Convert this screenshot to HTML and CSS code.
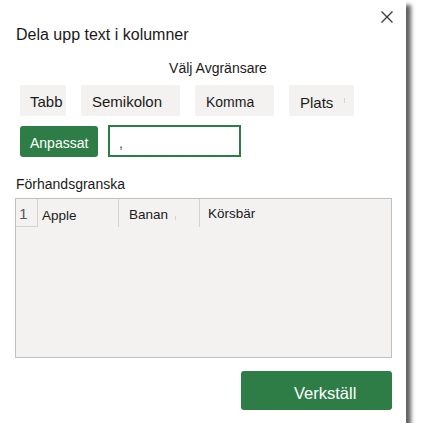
FILE: index.html
```html
<!DOCTYPE html>
<html lang="sv">
<head>
<meta charset="utf-8">
<title>Dela upp text i kolumner</title>
<link rel="stylesheet" href="styles.css">
</head>
<body>
<div class="dialog">
  <div class="topbar">
    <button class="close" aria-label="Stäng">
      <svg width="12" height="12" viewBox="0 0 12 12"><path d="M0.5 0.5 L11.5 11.5 M11.5 0.5 L0.5 11.5" stroke="#3b3a39" stroke-width="1.3" fill="none"/></svg>
    </button>
  </div>
  <h1 class="title">Dela upp text i kolumner</h1>
  <div class="delim-label">Välj Avgränsare</div>
  <div class="delims">
    <button class="delim w-tabb">Tabb</button>
    <button class="delim w-semi">Semikolon</button>
    <button class="delim w-komma">Komma</button>
    <button class="delim w-plats">Plats<span class="tick tick-plats"></span></button>
  </div>
  <div class="custom-row">
    <button class="custom">Anpassat</button>
    <div class="custom-input">,</div>
  </div>
  <div class="preview-label">Förhandsgranska</div>
  <div class="preview">
    <div class="prow">
      <div class="pcell pnum">1</div>
      <div class="pcell papple">Apple</div>
      <div class="pcell pbanan">Banan<span class="tick tick-banan"></span></div>
      <div class="pcell pkors">Körsbär</div>
    </div>
  </div>
  <div class="footer">
    <button class="apply">Verkställ</button>
  </div>
</div>
</body>
</html>
```
FILE: styles.css
```css
html, body {
  margin: 0;
  padding: 0;
  background: #ffffff;
}
body {
  font-family: "Liberation Sans", Arial, sans-serif;
  color: #1f1e1d;
}
button {
  font-family: inherit;
  border: none;
  margin: 0;
  cursor: pointer;
  display: flex;
  align-items: flex-start;
  text-align: left;
}
.dialog {
  width: 406px;
  height: 423px;
  box-sizing: border-box;
  background: #ffffff;
  padding: 11px 14px 0 15px;
  box-shadow: 5px 5px 4px rgba(0, 0, 0, 0.62);
}
.topbar {
  display: flex;
  justify-content: flex-end;
  height: 12px;
  margin-right: -1px;
}
.close {
  width: 12px;
  height: 12px;
  padding: 0;
  background: transparent;
}
.close svg {
  display: block;
}
.title {
  margin: 2px 0 0 1px;
  font-size: 16px;
  font-weight: normal;
  line-height: 20px;
  color: #1b1a19;
}
.delim-label {
  margin-top: 15px;
  padding-left: 29px;
  text-align: center;
  font-size: 14px;
  line-height: 16px;
  color: #1b1a19;
}
.delims {
  display: flex;
  gap: 15px;
  margin: 9px 0 0 5px;
}
.delim {
  height: 31px;
  box-sizing: border-box;
  background: #f3f2f1;
  border-radius: 2px;
  padding: 8px 0 0 11px;
  font-size: 15px;
  line-height: 17px;
  color: #1b1a19;
  white-space: nowrap;
  overflow: hidden;
}
.w-tabb { width: 46px; padding-left: 10px; }
.w-semi { width: 99px; }
.w-komma { width: 79px; font-size: 14px; padding-top: 9px; }
.w-plats { width: 65px; padding-top: 9px; }
.tick {
  display: inline-block;
  width: 1px;
  background: #d6d4d2;
}
.tick-plats {
  height: 5px;
  margin: 4px 0 0 11px;
}
.custom-row {
  display: flex;
  gap: 10px;
  margin: 10px 0 0 5px;
}
.custom {
  width: 78px;
  height: 31px;
  box-sizing: border-box;
  background: #2e7d46;
  color: #ffffff;
  border-radius: 3px;
  padding: 9px 0 0 10px;
  font-size: 14px;
  line-height: 16px;
}
.custom-input {
  width: 133px;
  height: 32px;
  margin-top: -1px;
  box-sizing: border-box;
  border: 2px solid #2e7d46;
  padding: 8px 0 0 9px;
  font-size: 14px;
  line-height: 16px;
  color: #4a4948;
}
.preview-label {
  margin: 19px 0 0 1px;
  font-size: 14px;
  line-height: 16px;
  color: #1b1a19;
}
.preview {
  margin-top: 6px;
  height: 160px;
  box-sizing: border-box;
  border: 1px solid #c2c0be;
  background: #f3f2f1;
}
.prow {
  display: flex;
  align-items: flex-start;
}
.pcell {
  height: 28px;
  box-sizing: border-box;
  font-size: 13px;
  line-height: 16px;
  color: #1b1a19;
  white-space: nowrap;
}
.pnum {
  width: 22px;
  height: 28px;
  border-right: 1px solid #d4d2d0;
  border-bottom: 1px solid #d4d2d0;
  padding: 6px 0 0 3px;
  font-size: 15.5px;
  line-height: 17px;
  color: #5c5b5a;
}
.papple {
  width: 81px;
  border-right: 1px solid #d4d2d0;
  padding: 9px 0 0 4px;
  font-size: 13.5px;
}
.pbanan {
  width: 81px;
  border-right: 1px solid #d4d2d0;
  padding: 8px 0 0 10px;
  font-size: 13.5px;
}
.tick-banan {
  height: 4px;
  margin: 0 0 0 7px;
  vertical-align: -1px;
}
.pkors {
  padding: 7px 0 0 8px;
  font-size: 13.5px;
}
.footer {
  display: flex;
  justify-content: flex-end;
  margin-top: 13px;
}
.apply {
  width: 151px;
  height: 39px;
  box-sizing: border-box;
  background: #2e7d46;
  color: #ffffff;
  border-radius: 3px;
  padding: 13px 0 0 53px;
  font-size: 16.5px;
  line-height: 18px;
}
```
